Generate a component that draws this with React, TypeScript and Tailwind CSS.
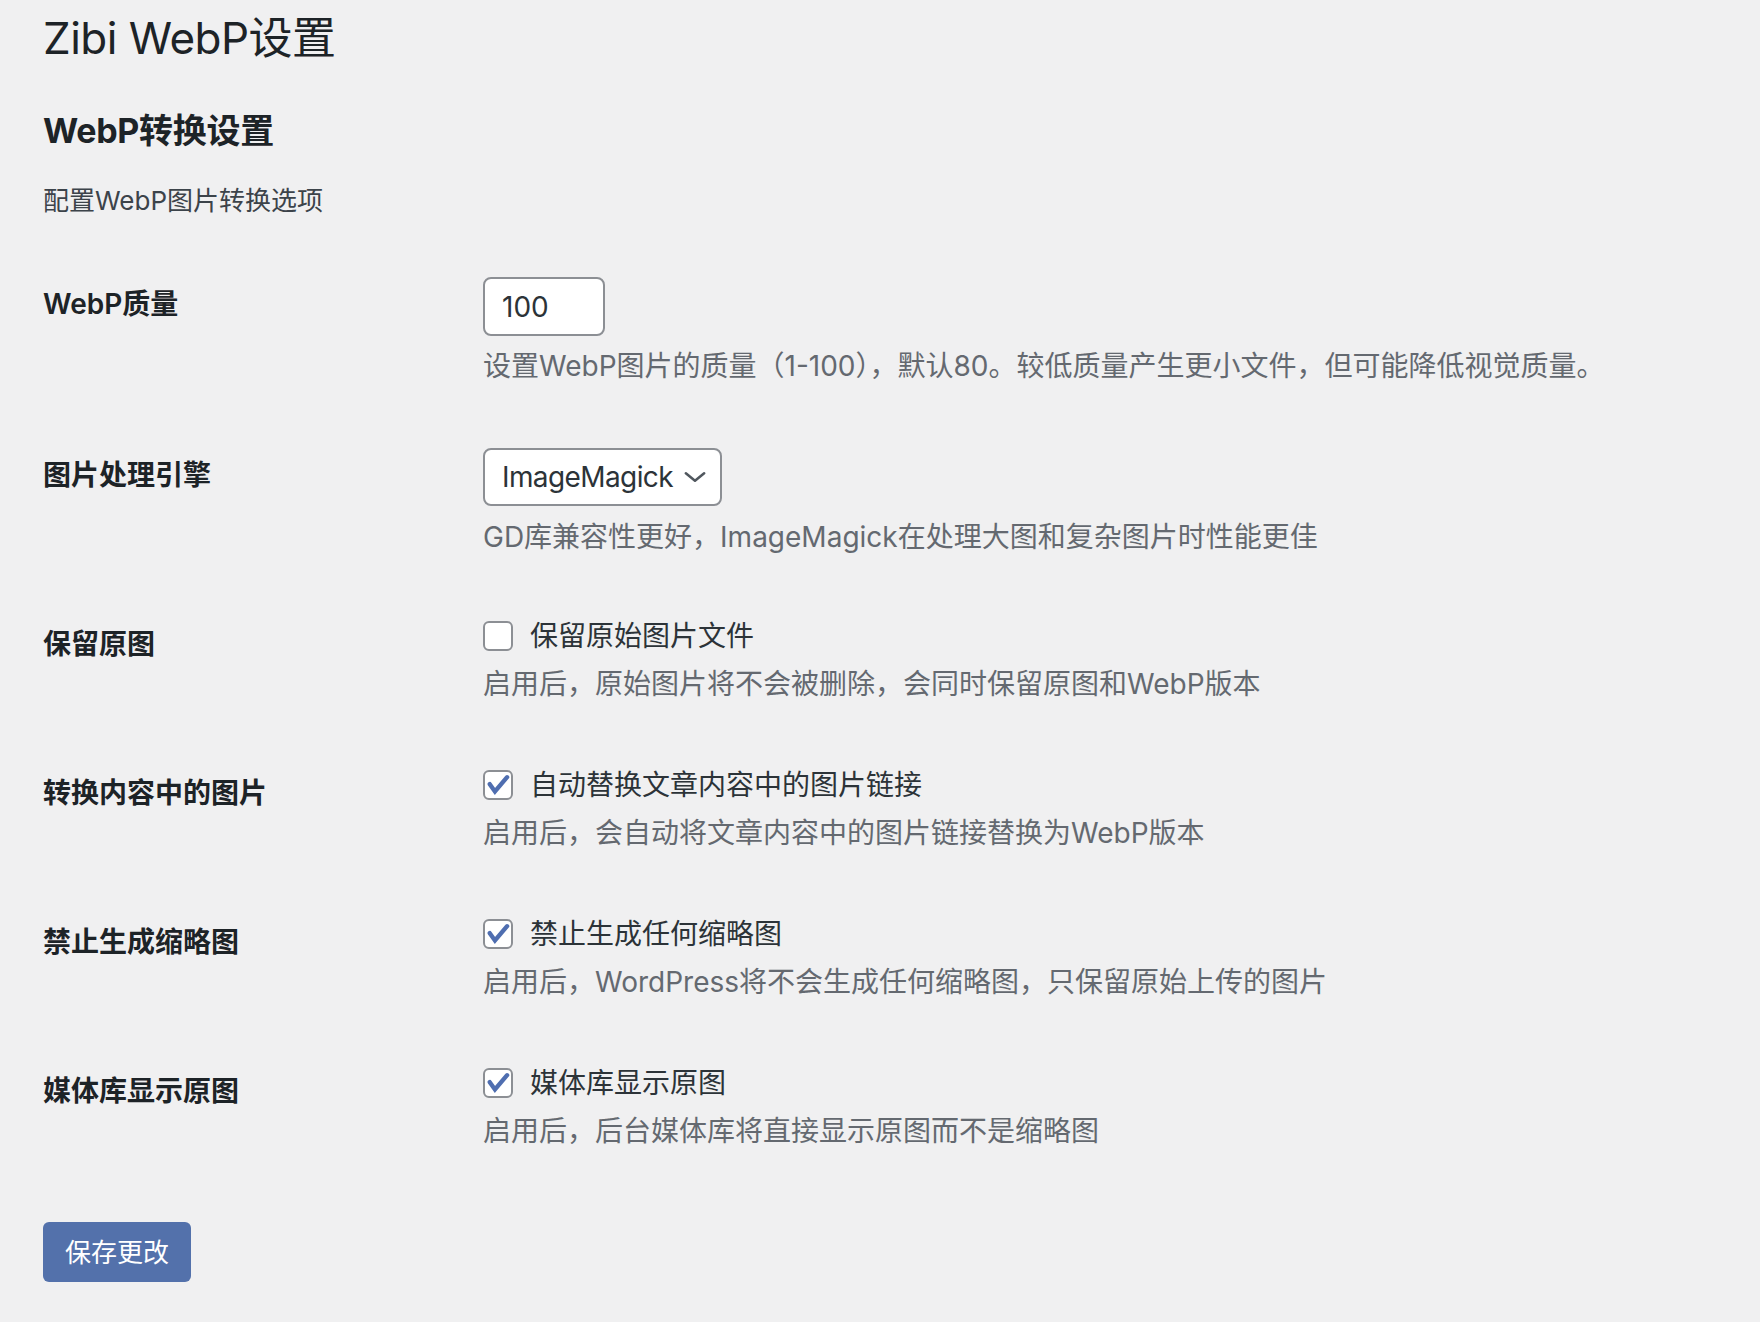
import React from "react";

const FONT = { fontFamily: '"Inter", "Noto Sans CJK SC", "Noto Sans", sans-serif' };

function Check({ checked }: { checked: boolean }) {
  return (
    <span className="relative flex h-[30px] w-[30px] shrink-0 items-center justify-center rounded-[6px] border-2 border-[#8c8f94] bg-white">
      {checked && (
        <svg viewBox="0 0 30 30" className="h-[30px] w-[30px]">
          <path
            d="M5.5 14 L11.5 22.5 L25.5 6"
            fill="none"
            stroke="#4f6eb0"
            strokeWidth="5"
            strokeLinejoin="miter"
            strokeLinecap="round"
          />
        </svg>
      )}
    </span>
  );
}

function CheckRow({
  label,
  text,
  desc,
  checked,
}: {
  label: string;
  text: string;
  desc: string;
  checked: boolean;
}) {
  return (
    <div className="flex">
      <div className="w-[420px] shrink-0 pt-[40px] text-[28px] font-semibold leading-[36px] text-[#1d2327]">
        {label}
      </div>
      <div className="pl-[20px] pt-[30px] pb-[31px]">
        <div className="flex h-[40px] items-center gap-[17px] text-[28px] leading-[40px] text-[#2c3338]">
          <Check checked={checked} />
          <span>{text}</span>
        </div>
        <p className="mt-[8px] whitespace-nowrap text-[28px] leading-[40px] text-[#646970]">{desc}</p>
      </div>
    </div>
  );
}

export default function App() {
  return (
    <div className="min-h-screen w-full bg-[#f0f0f1]" style={FONT}>
      <div className="pl-[43px]">
        <h1 className="pt-[9px] text-[44px] font-normal leading-[58px] tracking-[-0.5px] text-[#1d2327]">
          Zibi WebP设置
        </h1>
        <h2 className="mt-[42px] text-[34px] font-bold leading-[44px] tracking-[-0.3px] text-[#1d2327]">
          WebP转换设置
        </h2>
        <p className="mt-[28px] text-[26px] leading-[40px] text-[#3c434a]">配置WebP图片转换选项</p>

        <div className="mt-[25px]">
          {/* WebP quality */}
          <div className="flex">
            <div className="w-[420px] shrink-0 pt-[40px] text-[28px] font-semibold leading-[36px] text-[#1d2327]">
              WebP质量
            </div>
            <div className="pl-[20px] pt-[31px] pb-[31px]">
              <div className="flex h-[59px] w-[122px] items-center rounded-[8px] border-2 border-[#8c8f94] bg-white pl-[17px] text-[28px] text-[#2c3338]">
                100
              </div>
              <p className="mt-[10px] whitespace-nowrap text-[28px] leading-[40px] text-[#646970]">
                设置WebP图片的质量（1-100），默认80。较低质量产生更小文件，但可能降低视觉质量。
              </p>
            </div>
          </div>

          {/* engine */}
          <div className="flex">
            <div className="w-[420px] shrink-0 pt-[40px] text-[28px] font-semibold leading-[36px] text-[#1d2327]">
              图片处理引擎
            </div>
            <div className="pl-[20px] pt-[31px] pb-[29px]">
              <div className="flex h-[58px] w-[239px] items-center gap-[11px] rounded-[8px] border-2 border-[#8c8f94] bg-white pl-[17px] text-[28px] tracking-[-0.6px] text-[#2c3338]">
                <span>ImageMagick</span>
                <svg viewBox="0 0 24 12" className="h-[12px] w-[22px] shrink-0">
                  <path d="M2 2 L12 10 L22 2" fill="none" stroke="#50575e" strokeWidth="2.8" strokeLinecap="round" strokeLinejoin="round" />
                </svg>
              </div>
              <p className="mt-[11px] whitespace-nowrap text-[28px] leading-[40px] text-[#646970]">
                GD库兼容性更好，ImageMagick在处理大图和复杂图片时性能更佳
              </p>
            </div>
          </div>

          <CheckRow
            label="保留原图"
            text="保留原始图片文件"
            desc="启用后，原始图片将不会被删除，会同时保留原图和WebP版本"
            checked={false}
          />
          <CheckRow
            label="转换内容中的图片"
            text="自动替换文章内容中的图片链接"
            desc="启用后，会自动将文章内容中的图片链接替换为WebP版本"
            checked={true}
          />
          <CheckRow
            label="禁止生成缩略图"
            text="禁止生成任何缩略图"
            desc="启用后，WordPress将不会生成任何缩略图，只保留原始上传的图片"
            checked={true}
          />
          <CheckRow
            label="媒体库显示原图"
            text="媒体库显示原图"
            desc="启用后，后台媒体库将直接显示原图而不是缩略图"
            checked={true}
          />
        </div>

        <div className="mt-[40px] pb-[40px]">
          <button className="flex h-[60px] w-[148px] items-center justify-center rounded-[6px] bg-[#5371ab] text-[26px] text-white">
            保存更改
          </button>
        </div>
      </div>
    </div>
  );
}
